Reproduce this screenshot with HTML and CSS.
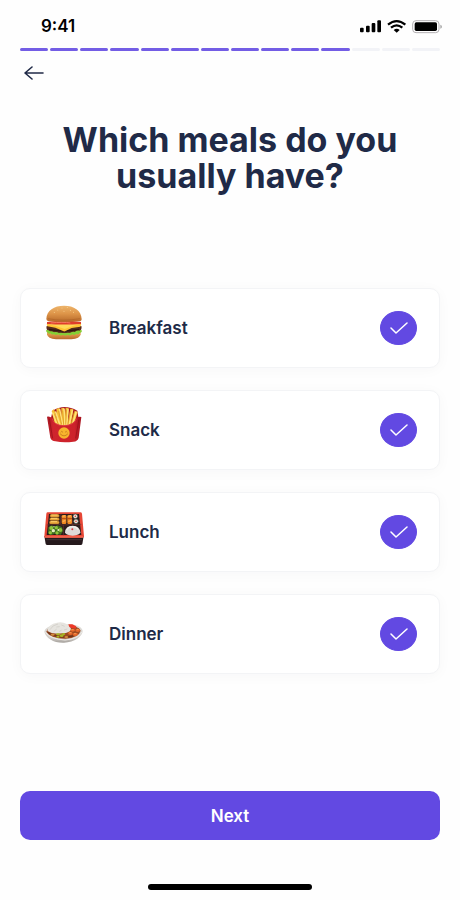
FILE: index.html
```html
<!DOCTYPE html>
<html lang="en">
<head>
<meta charset="utf-8">
<meta name="viewport" content="width=device-width, initial-scale=1">
<title>Meals</title>
<link rel="stylesheet" href="styles.css">
</head>
<body>
<div class="screen">
  <header class="status">
    <time class="clock">9:41</time>
    <svg class="status-icons" viewBox="390 54 246 45" aria-hidden="true">
      <rect x="390" y="80" width="11" height="14" rx="3"/>
      <rect x="408" y="74" width="11" height="20" rx="3"/>
      <rect x="425" y="66" width="11" height="28" rx="3"/>
      <rect x="442" y="58" width="11" height="36" rx="3"/>
      <g fill="none" stroke="#000" stroke-width="7">
        <path d="M474 71Q500 50 526 71"/>
        <path d="M483 80Q500 66 517 80"/>
      </g>
      <path d="M491 87Q500 80 509 87L500 95Z"/>
      <rect x="548" y="59" width="79" height="36" rx="10" fill="none" stroke="#b3b0b3" stroke-width="3"/>
      <rect x="554" y="64" width="67" height="26" rx="5"/>
      <path d="M631 71Q636 73 636 77T631 83Z" fill="#aaa"/>
    </svg>
  </header>

  <div class="progress" role="progressbar" aria-label="Progress" aria-valuemin="0" aria-valuemax="14" aria-valuenow="11">
    <i class="step done"></i><i class="step done"></i><i class="step done"></i><i class="step done"></i><i class="step done"></i><i class="step done"></i><i class="step done"></i><i class="step done"></i><i class="step done"></i><i class="step done"></i><i class="step done"></i><i class="step"></i><i class="step"></i><i class="step"></i>
  </div>

  <button class="back" type="button" aria-label="Back">
    <svg viewBox="0 0 20 16" aria-hidden="true"><path d="M19 8H1M8 2L1 8L8 14"/></svg>
  </button>

  <h1 class="title">Which meals do you usually have?</h1>

  <form class="form">
    <div class="meals">
      <label class="meal" for="breakfast">
        <svg class="food" viewBox="12 9 120 120" aria-hidden="true">
          <defs>
            <linearGradient id="bun" x2="0" y2="1"><stop stop-color="#eeb56c"/><stop offset=".5" stop-color="#dd9448"/><stop offset="1" stop-color="#b7692a"/></linearGradient>
          </defs>
          <path d="M21 90H122V103Q120 117 94 118H48Q23 117 21 103Z" fill="url(#bun)"/>
          <path d="M20 78Q71 72 124 78Q127 88 117 96Q71 103 27 96Q17 88 20 78Z" fill="#552a1c"/>
          <path d="M27 88Q71 97 117 88" stroke="#30170f" stroke-width="4" fill="none"/>
          <path d="M18 91Q23 88 30 94Q36 92 42 97Q50 94 56 99Q64 97 72 100Q82 97 90 99Q98 94 104 96Q111 91 118 92Q124 88 126 93Q124 100 119 98Q115 106 109 101Q103 108 97 103Q90 109 83 104Q76 109 69 104Q61 109 55 103Q47 108 42 102Q36 106 31 100Q25 103 24 98Q18 98 18 91Z" fill="#84cf35"/>
          <path d="M20 71H124L121 80L95 84L75 94Q72 95 69 93L46 83L22 79Z" fill="#ffc334"/>
          <path d="M22 72H121L101 77L74 87L45 77Z" fill="#ffda58"/>
          <path d="M21 66Q71 58 123 66V72Q71 75 21 72Z" fill="#df3d2c"/>
          <path d="M32 69Q70 65 91 69" stroke="#f37a60" stroke-width="3" fill="none"/>
          <path d="M19 57C20 31 42 17 72 17S124 31 125 57Q125 64 117 64Q70 68 27 64Q19 63 19 57Z" fill="url(#bun)"/>
          <path d="M24 56Q67 65 120 56" stroke="#a75d24" stroke-width="3" fill="none" opacity=".5"/>
          <g fill="#ffe3a4"><ellipse cx="66" cy="24" rx="2" ry="1"/><ellipse cx="82" cy="22" rx="2" ry="1"/><ellipse cx="53" cy="30" rx="2" ry="1"/><ellipse cx="72" cy="34" rx="1" ry="2"/><ellipse cx="92" cy="31" rx="1" ry="2"/><ellipse cx="101" cy="37" rx="1" ry="2"/><ellipse cx="43" cy="37" rx="2" ry="1"/></g>
        </svg>
        <span class="name">Breakfast</span>
        <span class="tick"><input class="box" id="breakfast" type="checkbox" checked><svg class="mark" viewBox="0 0 18 14" aria-hidden="true"><path d="M1 7L6 12L17 2"/></svg></span>
      </label>

      <label class="meal" for="snack">
        <svg class="food" viewBox="12 15 120 120" aria-hidden="true">
          <defs>
            <linearGradient id="carton"><stop stop-color="#a91520"/><stop offset=".18" stop-color="#cf242d"/><stop offset=".8" stop-color="#cd222b"/><stop offset="1" stop-color="#a6131d"/></linearGradient>
          </defs>
          <path d="M38 32Q73 10 112 32L119 75H28Z" fill="#a91821"/>
          <path d="M35 33L42 27L57 74H45ZM49 27L58 23L66 77H54ZM64 24H72L74 78H64ZM77 23L86 24L82 78H73ZM91 26L100 28L92 76H82ZM104 32L113 36L102 75H92Z" fill="#f5bd36"/>
          <path d="M38 39L51 72M47 36L60 76M59 29L68 75M72 27L75 76M84 29L80 76M97 32L87 76M108 37L98 71" stroke="#ffe278" stroke-width="5" stroke-linecap="round"/>
          <path d="M44 43L55 74M56 33L65 73M68 32L71 75M79 29L77 74M91 34L84 72M102 38L94 71" stroke="#d99420" stroke-width="2"/>
          <path d="M21 50Q29 48 37 54Q40 75 71 76Q102 75 109 54Q117 48 124 51L116 113Q113 124 100 125Q71 129 46 124Q34 123 31 113Z" fill="url(#carton)"/>
          <path d="M37 56Q41 76 71 77Q103 76 109 56" fill="none" stroke="#e8484a" stroke-width="2"/>
          <path d="M28 56L38 115M117 56L107 115" stroke="#930e18" stroke-width="2"/>
          <circle cx="72" cy="99" r="17" fill="#f7b52d"/>
          <path d="M63 96Q65 91 68 96M76 96Q79 91 81 96M61 102Q72 114 83 102" fill="none" stroke="#b66516" stroke-width="2" stroke-linecap="round"/>
        </svg>
        <span class="name">Snack</span>
        <span class="tick"><input class="box" id="snack" type="checkbox" checked><svg class="mark" viewBox="0 0 18 14" aria-hidden="true"><path d="M1 7L6 12L17 2"/></svg></span>
      </label>

      <label class="meal" for="lunch">
        <svg class="food" viewBox="12 6 120 120" aria-hidden="true">
          <path d="M13 93H131L127 117Q126 120 122 120H22Q18 120 17 117Z" fill="#25191c"/>
          <path d="M23 22H121Q125 22 126 26L132 94Q132 98 127 98H17Q12 98 13 94L19 26Q20 22 23 22Z" fill="#e64635"/>
          <path d="M27 27H117L124 90H20Z" fill="#2b1c1d"/>
          <path d="M63 27L61 58L20 60M61 60L124 58M94 27L98 58M70 60V91" fill="none" stroke="#6c3732" stroke-width="2"/>
          <g fill="#e6a43a" stroke="#7c4313" stroke-width="1"><rect x="30" y="28" width="28" height="9" rx="4"/><rect x="29" y="38" width="29" height="9" rx="4"/><rect x="28" y="48" width="30" height="9" rx="4"/></g>
          <path d="M34 30H53M33 40H52M32 50H51" stroke="#ffd16d" stroke-width="3"/>
          <g fill="#f08a22"><rect x="65" y="30" width="14" height="27" rx="4"/><rect x="82" y="30" width="14" height="27" rx="4"/></g>
          <path d="M68 34L76 32M68 49L76 47M85 34L93 32M85 49L93 47" stroke="#ffc06a" stroke-width="3"/>
          <path d="M65 41H79M82 41H96" stroke="#b44415" stroke-width="3"/>
          <g fill="#eeeae2" stroke="#384238" stroke-width="2"><circle cx="106" cy="34" r="7"/><circle cx="108" cy="49" r="7"/></g>
          <circle cx="106" cy="34" r="2.5" fill="#d44838"/><circle cx="108" cy="49" r="2.5" fill="#d44838"/>
          <path d="M25 67L35 61L43 65L52 61L66 66L69 79L62 89L44 86L32 91L24 85Z" fill="#426e20"/>
          <g fill="#8ec43d"><circle cx="34" cy="69" r="6"/><circle cx="49" cy="68" r="5"/><circle cx="61" cy="75" r="6"/><circle cx="31" cy="83" r="5"/><circle cx="51" cy="84" r="5"/></g>
          <g fill="#e6edbc"><circle cx="40" cy="77" r="5"/><circle cx="55" cy="75" r="3"/><circle cx="42" cy="65" r="2"/></g>
          <path d="M75 82Q76 63 98 62Q119 63 121 82Q120 91 98 92Q76 91 75 82Z" fill="#dedbd9"/>
          <path d="M80 76Q84 65 98 65Q110 65 115 74" stroke="#f3f1ef" stroke-width="4" fill="none"/>
          <circle cx="97" cy="73" r="3" fill="#d84048"/>
          <path d="M14 96H130" stroke="#ff765e" stroke-width="3"/>
          <path d="M19 104H126" stroke="#514044" stroke-width="2"/>
        </svg>
        <span class="name">Lunch</span>
        <span class="tick"><input class="box" id="lunch" type="checkbox" checked><svg class="mark" viewBox="0 0 18 14" aria-hidden="true"><path d="M1 7L6 12L17 2"/></svg></span>
      </label>

      <label class="meal" for="dinner">
        <svg class="food" viewBox="12 -3 120 120" aria-hidden="true">
          <defs>
            <linearGradient id="plate" x2="0" y2="1"><stop stop-color="#e4e1dd"/><stop offset=".75" stop-color="#d2cfca"/><stop offset="1" stop-color="#a5a09b"/></linearGradient>
          </defs>
          <path d="M13 65C15 49 42 42 75 42S125 49 128 62C129 78 103 97 72 98S17 84 13 65Z" fill="url(#plate)"/>
          <path d="M19 65Q25 48 72 46Q117 47 122 62Q117 83 76 86Q31 85 19 65Z" fill="#9c4a20"/>
          <path d="M23 67Q49 87 100 78" stroke="#6f3219" stroke-width="4" fill="none"/>
          <path d="M22 63Q25 42 51 38Q66 34 80 42Q91 46 93 58Q90 69 68 70Q40 75 22 63Z" fill="#e6e4df"/>
          <path d="M30 59Q37 45 54 42M41 65L50 57M58 66L65 59M64 45L74 49M72 60L82 57M49 51L59 50" stroke="#cbc9c3" stroke-width="2" fill="none"/>
          <path d="M85 43L97 43L109 49L107 56L96 55L88 51Z" fill="#ed3928"/>
          <g fill="#e4672a"><ellipse cx="98" cy="61" rx="7" ry="4"/><ellipse cx="113" cy="61" rx="7" ry="5"/><ellipse cx="91" cy="70" rx="7" ry="5"/><ellipse cx="106" cy="73" rx="8" ry="5"/></g>
          <path d="M94 59H101M110 58H116M88 68H94M102 71H109" stroke="#ffae61" stroke-width="2"/>
          <g fill="#a6b827"><ellipse cx="54" cy="73" rx="6" ry="3"/><ellipse cx="65" cy="77" rx="6" ry="4"/><ellipse cx="71" cy="72" rx="5" ry="3"/><ellipse cx="54" cy="80" rx="5" ry="3"/></g>
          <g fill="#d28b3d"><ellipse cx="38" cy="74" rx="6" ry="3"/><ellipse cx="79" cy="81" rx="6" ry="3"/></g>
          <path d="M16 67Q31 87 75 90Q114 87 126 66" fill="none" stroke="#eeebe7" stroke-width="3"/>
        </svg>
        <span class="name">Dinner</span>
        <span class="tick"><input class="box" id="dinner" type="checkbox" checked><svg class="mark" viewBox="0 0 18 14" aria-hidden="true"><path d="M1 7L6 12L17 2"/></svg></span>
      </label>
    </div>
    <button class="next" type="button">Next</button>
  </form>
  <div class="home-bar"></div>
</div>
</body>
</html>
```
FILE: styles.css
```css
* { box-sizing: border-box; }

body {
  margin: 0;
  background: #fefefe;
  color: #202a47;
  font-family: Inter, "Liberation Sans", sans-serif;
}

.screen {
  display: flex;
  flex-direction: column;
  min-height: 100vh;
  padding: 16px 20px 10px;
}

.status {
  display: flex;
  justify-content: space-between;
  align-items: center;
  height: 20px;
  padding-left: 21px;
  margin-right: -2px;
}

.clock {
  color: #000;
  font-size: 17px;
  font-weight: 600;
  line-height: 20px;
}

.status-icons { width: 82px; height: 15px; }

.progress {
  display: flex;
  gap: 2px;
  margin-top: 12px;
}

.step {
  flex: 1;
  height: 3px;
  border-radius: 2px;
  background: #f2f3f7;
}

.step.done { background: #735de5; }

.back {
  align-self: flex-start;
  display: flex;
  margin-top: 10px;
  padding: 4px;
  border: 0;
  background: none;
}

.back svg {
  width: 20px;
  height: 16px;
  fill: none;
  stroke: #202a47;
  stroke-width: 1.6;
  stroke-linecap: round;
  stroke-linejoin: round;
}

.title {
  max-width: 350px;
  margin: 37px auto 0;
  font-size: 34px;
  font-weight: 700;
  line-height: 36px;
  text-align: center;
}

.form {
  flex: 1;
  display: flex;
  flex-direction: column;
  justify-content: space-between;
  margin-top: 94px;
}

.meals { display: grid; gap: 22px; }

.meal {
  display: flex;
  align-items: center;
  height: 80px;
  padding: 0 22px 0 23px;
  border: 1px solid #f3f4f6;
  border-radius: 10px;
  background: #fff;
  box-shadow: 0 2px 14px rgba(32, 42, 71, 0.03);
}

.food {
  align-self: flex-start;
  width: 40px;
  height: 40px;
  margin-top: 14px;
}

.name {
  flex: 1;
  margin-left: 25px;
  font-size: 17px;
  font-weight: 600;
  line-height: 24px;
}

.tick { display: grid; place-items: center; }

.box, .mark { grid-area: 1 / 1; }

.box {
  appearance: none;
  width: 37px;
  height: 34px;
  margin: 0;
  border: 1px solid #6249e2;
  border-radius: 50%;
}

.box:checked { background: #6249e2; }

.mark {
  width: 18px;
  height: 14px;
  fill: none;
  stroke: #fff;
  stroke-width: 1.5;
  stroke-linecap: round;
  stroke-linejoin: round;
  pointer-events: none;
}

.next {
  height: 49px;
  border: 0;
  border-radius: 10px;
  background: #6249e2;
  color: #fff;
  font-family: inherit;
  font-size: 17px;
  font-weight: 600;
}

.home-bar {
  align-self: center;
  width: 39%;
  height: 6px;
  margin-top: 44px;
  border-radius: 3px;
  background: #000;
}
```
